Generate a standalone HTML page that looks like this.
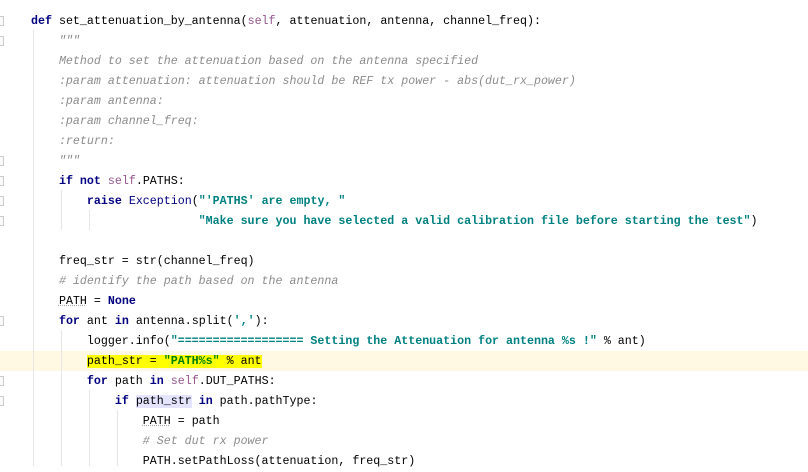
<!DOCTYPE html>
<html><head><meta charset="utf-8"><style>
body{margin:0;width:808px;height:466px;background:#fff;overflow:hidden;position:relative;font-family:"Liberation Mono",monospace;font-size:11.65px;color:#000}
.l{position:absolute;left:31px;height:20px;line-height:20px;white-space:pre;margin-top:2px}
.k{color:#000080;font-weight:bold}
.s{color:#94558d}
.st{color:#008080;font-weight:bold}
.d{color:#8c8c8c;font-style:italic}
.c{color:#8c8c8c;font-style:italic}
.b{color:#000080}
.g{position:absolute;width:1px;background:#e6e6e6}
.m{position:absolute;left:0;width:3px;height:8px;border:1px solid #ccc;border-left:none;background:#fafafa}
.hl{background:#ffff00}
.u{text-decoration:underline dotted #aaa}
</style></head><body>
<div style="position:absolute;left:0;top:351px;width:808px;height:20px;background:#fff9e3"></div>
<div class="g" style="left:33px;top:30px;height:436px"></div>
<div class="g" style="left:61px;top:190px;height:40px"></div>
<div class="g" style="left:89px;top:210px;height:20px"></div>
<div class="g" style="left:61px;top:330px;height:136px"></div>
<div class="g" style="left:89px;top:390px;height:76px"></div>
<div class="g" style="left:117px;top:410px;height:56px"></div>
<div class="m" style="top:16px"></div><div class="m" style="top:36px"></div>
<div class="m" style="top:156px"></div><div class="m" style="top:176px"></div>
<div class="m" style="top:196px"></div><div class="m" style="top:216px"></div>
<div class="m" style="top:316px"></div><div class="m" style="top:376px"></div>
<div class="m" style="top:396px"></div>
<div class="l" style="top:10px"><span class="k">def</span> set_attenuation_by_antenna(<span class="s">self</span>, attenuation, antenna, channel_freq):</div>
<div class="l d" style="top:30px">    """</div>
<div class="l d" style="top:50px">    Method to set the attenuation based on the antenna specified</div>
<div class="l d" style="top:70px">    :param attenuation: attenuation should be REF tx power - abs(dut_rx_power)</div>
<div class="l d" style="top:90px">    :param antenna:</div>
<div class="l d" style="top:110px">    :param channel_freq:</div>
<div class="l d" style="top:130px">    :return:</div>
<div class="l d" style="top:150px">    """</div>
<div class="l" style="top:170px">    <span class="k">if not</span> <span class="s">self</span>.PATHS:</div>
<div class="l" style="top:190px">        <span class="k">raise</span> <span class="b">Exception</span>(<span class="st">"'PATHS' are empty, "</span></div>
<div class="l" style="top:210px">                        <span class="st">"Make sure you have selected a valid calibration file before starting the test"</span>)</div>
<div class="l" style="top:250px">    freq_str = str(channel_freq)</div>
<div class="l c" style="top:270px">    # identify the path based on the antenna</div>
<div class="l" style="top:290px">    <span class="u">PATH</span> = <span class="k">None</span></div>
<div class="l" style="top:310px">    <span class="k">for</span> ant <span class="k">in</span> antenna.split(<span class="st">','</span>):</div>
<div class="l" style="top:330px">        logger.info(<span class="st">"================== Setting the Attenuation for antenna %s !"</span> % ant)</div>
<div class="l" style="top:350px">        <span class="hl">path_str = <span class="st" style="color:#008000">"PATH%s"</span> % ant</span></div>
<div class="l" style="top:370px">        <span class="k">for</span> path <span class="k">in</span> <span class="s">self</span>.DUT_PATHS:</div>
<div class="l" style="top:390px">            <span class="k">if</span> <span style="background:#e4e4ff">path_str</span> <span class="k">in</span> path.pathType:</div>
<div class="l" style="top:410px">                <span class="u">PATH</span> = path</div>
<div class="l c" style="top:430px">                # Set dut rx power</div>
<div class="l" style="top:450px">                PATH.setPathLoss(attenuation, freq_str)</div>
</body></html>
